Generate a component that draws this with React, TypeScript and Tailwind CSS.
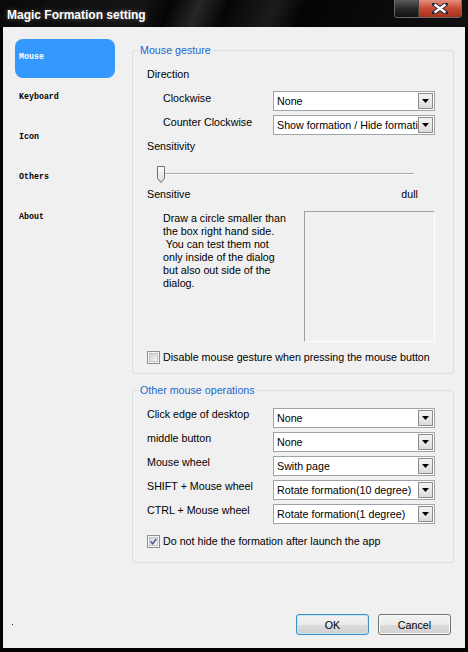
import React from "react";

const sideItems = ["Mouse", "Keyboard", "Icon", "Others", "About"];

const ComboBox = ({ value }: { value: string }) => {
  return (
    <div className="w-[162px] h-[20px] bg-white border border-[#a0a4a8] flex items-center shrink-0">
      <div className="flex-1 pl-[3px] overflow-hidden whitespace-nowrap leading-[14px]">{value}</div>
      <div className="w-[15px] h-[16px] mr-[1px] border border-[#8c8c8c] bg-[linear-gradient(#f4f4f4,#dcdcdc)] flex items-center justify-center shrink-0">
        <svg width="7" height="4" viewBox="0 0 7 4">
          <path d="M0 0H7L3.5 4Z" fill="#000" />
        </svg>
      </div>
    </div>
  );
};

const CheckBox = ({ checked, label }: { checked?: boolean; label: string }) => {
  return (
    <div className="flex items-center h-[14px] gap-[3px]">
      <div className="w-[13px] h-[13px] border border-[#8e8f8f] bg-[#f4f4f4] p-[1px] shrink-0">
        <div className="w-full h-full border border-[#c4c4c4] bg-[linear-gradient(135deg,#cfcfcf,#f7f7f7)] flex items-center justify-center">
          {checked && (
            <svg width="9" height="9" viewBox="0 0 9 9">
              <path d="M1 4.5L3.5 7.5L8 1" stroke="#3a4f9a" strokeWidth="1.8" fill="none" />
            </svg>
          )}
        </div>
      </div>
      <span className="leading-[14px]">{label}</span>
    </div>
  );
};

const GroupBox = ({
  title,
  height,
  children,
}: {
  title: string;
  height: string;
  children: React.ReactNode;
}) => {
  return (
    <div className={`relative border border-[#d5dfe5] rounded-[3px] ${height}`}>
      <span className="absolute left-[6px] top-[-8px] px-[1px] bg-[#f0f0f0] text-[#2368cf] leading-[14px]">
        {title}
      </span>
      {children}
    </div>
  );
};

export default function App() {
  return (
    <div className="w-[468px] h-[652px] bg-black flex flex-col font-['Liberation_Sans',Arial,sans-serif] text-[10.7px] text-black">
      {/* title bar */}
      <div className="relative h-[27px] shrink-0 bg-[linear-gradient(112deg,#0a0a0a_0%,#151515_30%,#050505_36%,#262626_42%,#060606_48%,#1c1c1c_58%,#040404_64%,#111_100%)] flex items-center pl-[7px] pt-[2px]">
        <span className="text-white font-bold text-[12px] [text-shadow:0_0_5px_rgba(255,255,255,0.35)]">
          Magic Formation setting
        </span>
        <div className="absolute top-0 left-[394px] flex border border-t-0 border-[#6a6a6a] rounded-b-[4px] overflow-hidden">
          <div className="w-[24px] h-[17px] bg-[linear-gradient(#5c5c5c,#2a2a2a_50%,#111)] border-r border-[#444]" />
          <div className="w-[42px] h-[17px] bg-[linear-gradient(#e3907f,#c74a33_50%,#a8301c)] flex items-center justify-center">
            <svg width="16" height="11" viewBox="0 0 16 11">
              <path d="M2 1L14 10M14 1L2 10" stroke="#2a2a3a" strokeWidth="4.2" strokeLinecap="square" />
              <path d="M2.5 1.5L13.5 9.5M13.5 1.5L2.5 9.5" stroke="#fff" strokeWidth="2.2" />
            </svg>
          </div>
        </div>
      </div>

      {/* client area */}
      <div className="mx-[3px] h-[621px] bg-[#f0f0f0] flex flex-col">
        <div className="flex">
          {/* sidebar */}
          <div className="w-[129px] pl-[12px] pt-[12px] shrink-0">
            {sideItems.map((item, i) => (
              <div key={item} className="h-[40px]">
                <div
                  className={`w-[100px] h-[39px] pl-[4px] pt-[13px] rounded-[8px] font-['Liberation_Mono',monospace] font-bold text-[8.3px] leading-[10px] ${
                    i === 0 ? "bg-[#3399ff] text-white" : "text-black"
                  }`}
                >
                  {item}
                </div>
              </div>
            ))}
          </div>

          {/* main */}
          <div className="w-[322px] pt-[23px]">
            <GroupBox title="Mouse gesture" height="h-[324px]">
              <div className="pl-[14px]">
                <div className="mt-[16px] leading-[14px]">Direction</div>
                <div className="mt-[10px] pl-[16px] flex">
                  <div className="w-[110px] leading-[14px]">Clockwise</div>
                  <ComboBox value="None" />
                </div>
                <div className="mt-[4px] pl-[16px] flex">
                  <div className="w-[110px] leading-[14px]">Counter Clockwise</div>
                  <ComboBox value="Show formation / Hide formation" />
                </div>
                <div className="mt-[4px] leading-[14px]">Sensitivity</div>
                <div className="relative mt-[13px] ml-[9px] w-[260px] h-[18px]">
                  <div className="absolute left-[2px] top-[7px] w-[256px] h-[2px] border-t border-[#a8a8a8] border-b border-b-white" />
                  <svg className="absolute left-0 top-0" width="10" height="18" viewBox="0 0 10 18">
                    <defs>
                      <linearGradient id="th" x1="0" y1="0" x2="0" y2="1">
                        <stop offset="0" stopColor="#ffffff" />
                        <stop offset="1" stopColor="#d8d8d8" />
                      </linearGradient>
                    </defs>
                    <path d="M1.5 0.5H8.5V12.5L5 16.5L1.5 12.5Z" fill="url(#th)" stroke="#707070" />
                  </svg>
                </div>
                <div className="mt-[3px] w-[271px] flex justify-between leading-[14px]">
                  <span>Sensitive</span>
                  <span>dull</span>
                </div>
                <div className="mt-[10px] pl-[16px] flex">
                  <div className="w-[141px] pt-[1px] leading-[13px] whitespace-pre">
                    {"Draw a circle smaller than\nthe box right hand side.\n You can test them not\nonly inside of the dialog\nbut also out side of the\ndialog."}
                  </div>
                  <div className="w-[131px] h-[131px] border border-[#a0a0a0] border-r-white border-b-white" />
                </div>
                <div className="mt-[8px]">
                  <CheckBox label="Disable mouse gesture when pressing the mouse button" />
                </div>
              </div>
            </GroupBox>

            <div className="mt-[16px]">
              <GroupBox title="Other mouse operations" height="h-[173px]">
                <div className="pl-[14px] pt-[17px] flex flex-col gap-[4px]">
                  {[
                    ["Click edge of desktop", "None"],
                    ["middle button", "None"],
                    ["Mouse wheel", "Swith page"],
                    ["SHIFT + Mouse wheel", "Rotate formation(10 degree)"],
                    ["CTRL + Mouse wheel", "Rotate formation(1 degree)"],
                  ].map(([label, value]) => (
                    <div key={label} className="flex">
                      <div className="w-[126px] -mt-[1px] leading-[14px] whitespace-pre">{label}</div>
                      <ComboBox value={value} />
                    </div>
                  ))}
                  <div className="mt-[6px]">
                    <CheckBox checked label="Do not hide the formation after launch the app" />
                  </div>
                </div>
              </GroupBox>
            </div>
          </div>
        </div>

        {/* bottom buttons */}
        <div className="mt-auto pb-[13px] pl-[9px] pr-[14px] flex items-center">
          <div className="w-[1px] h-[1px] bg-[#302040]" />
          <div className="ml-auto flex gap-[9px]">
            <button className="w-[73px] h-[21px] rounded-[3px] border border-[#3c8fc9] bg-[linear-gradient(#f3f3f3,#ebebeb_50%,#dcdcdc_51%,#d0d0d0)] shadow-[inset_0_0_0_1px_#bfe6fb] leading-[14px]">
              OK
            </button>
            <button className="w-[73px] h-[21px] rounded-[3px] border border-[#707070] bg-[linear-gradient(#f3f3f3,#ebebeb_50%,#dcdcdc_51%,#d0d0d0)] shadow-[inset_0_0_0_1px_#fcfcfc] leading-[14px]">
              Cancel
            </button>
          </div>
        </div>
      </div>
    </div>
  );
}
